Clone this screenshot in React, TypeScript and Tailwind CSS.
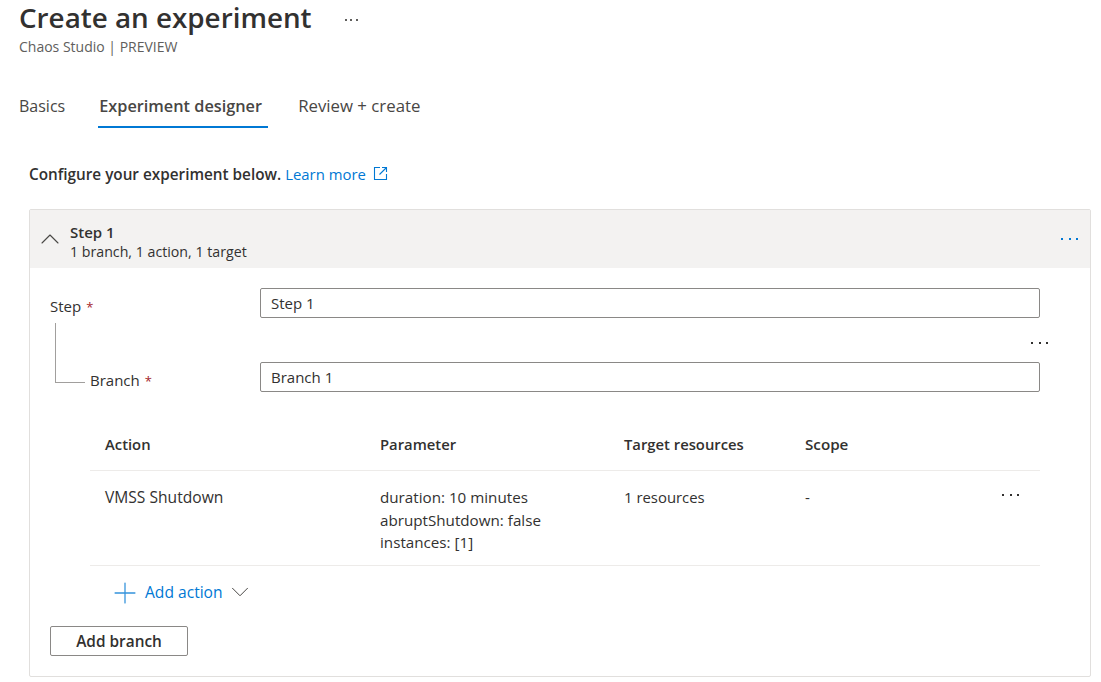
import { ChevronDown, ChevronUp, Plus } from "lucide-react";

const font = { fontFamily: '"Open Sans", "Noto Sans", sans-serif' };

// three square dots, the portal's "more" button
function Dots({ className }: { className: string }) {
  return (
    <div className={`flex gap-[5.5px] ${className}`}>
      <span className="w-[2px] h-[2px] bg-current" />
      <span className="w-[2px] h-[2px] bg-current" />
      <span className="w-[2px] h-[2px] bg-current" />
    </div>
  );
}

function Required() {
  return <span className="text-[#a4262c] ml-[5px] text-[13px]">*</span>;
}

function TextField({ value }: { value: string }) {
  return (
    <div className="h-[30px] border border-[#8a8886] rounded-[2px] px-[10px] flex items-center text-[15px]">
      {value}
    </div>
  );
}

function OpenInNew() {
  return (
    <svg className="ml-[7px] mb-[2px] text-[#0078d4]" width="15" height="15" viewBox="0 0 15 15" fill="none" stroke="currentColor" strokeWidth="1.1">
      <path d="M7 1.5H1.5V13.5H13.5V8" />
      <path d="M6.5 8.5L13.5 1.5M9 1.5H13.5V6" />
    </svg>
  );
}

export default function App() {
  return (
    <div className="w-[1101px] h-[682px] overflow-hidden bg-white text-[#323130] text-[15px]" style={font}>
      {/* Title */}
      <div className="pl-[19px] h-[34px] flex items-center">
        <h1 className="text-[27.8px] font-semibold leading-[34px]">Create an experiment</h1>
        <Dots className="ml-[33px] mt-[6px] text-[#605e5c] !gap-[3.5px]" />
      </div>
      <div className="pl-[19px] mt-[3px] text-[14px] leading-[20px] text-[#605e5c]">Chaos Studio | PREVIEW</div>

      {/* Tabs */}
      <div className="pl-[19px] mt-[34px] flex text-[16.3px] leading-[24px] text-[#484644]">
        <div className="pt-[3px] pb-[8px] text-[16px]">Basics</div>
        <div className="ml-[33px] w-[170px] pl-[1px] pt-[3px] pb-[8px] font-semibold border-b-2 border-[#0078d4]">
          Experiment designer
        </div>
        <div className="ml-[30px] pt-[3px] pb-[8px] text-[16.8px]">Review + create</div>
      </div>

      {/* Intro */}
      <div className="pl-[29px] mt-[36px] h-[20px] flex items-center">
        <span className="font-semibold text-[15.3px]">Configure your experiment below.</span>
        <span className="ml-[4px] text-[#0078d4] text-[14.9px]">Learn more</span>
        <OpenInNew />
      </div>

      {/* Step card */}
      <div className="ml-[29px] mt-[25px] w-[1062px] h-[468px] border border-[#e1dfdd] rounded-[2px]">
        <div className="h-[58px] bg-[#f3f2f1] flex items-center">
          <ChevronUp className="ml-[4px] text-[#484644]" size={32} strokeWidth={0.8} />
          <div className="ml-[4px] pt-[5px] text-[14.2px] leading-[19px]">
            <div className="font-semibold text-[15px]">Step 1</div>
            <div>1 branch, 1 action, 1 target</div>
          </div>
          <Dots className="ml-auto mr-[12px] mb-[1px] text-[#0078d4]" />
        </div>

        <div className="pl-[20px] pt-[20px]">
          {/* Step and branch fields */}
          <div className="grid grid-cols-[210px_780px] h-[104px]">
            <div>
              <div className="mt-[8px] leading-[20px]">
                Step
                <Required />
              </div>
              <div className="flex">
                <div className="ml-[5px] mt-[6px] w-[30px] h-[60px] border-l border-b border-[#a19f9d]" />
                <div className="ml-[5px] mt-[53px] leading-[20px]">
                  Branch
                  <Required />
                </div>
              </div>
            </div>
            <div>
              <TextField value="Step 1" />
              <Dots className="justify-end mt-[24px] mr-[-8px] text-[#323130]" />
              <div className="mt-[18px]">
                <TextField value="Branch 1" />
              </div>
            </div>
          </div>

          {/* Action table */}
          <div className="ml-[40px] w-[950px] mt-[27px]">
            <div className="grid grid-cols-[275px_244px_181px_1fr] pl-[15px] h-[52px] items-center font-semibold text-[14.8px] border-b border-[#edebe9]">
              <div>Action</div>
              <div>Parameter</div>
              <div>Target resources</div>
              <div className="text-[15.2px]">Scope</div>
            </div>
            <div className="grid grid-cols-[275px_244px_181px_1fr] pl-[15px] h-[95px] pt-[15px] border-b border-[#edebe9] leading-[22.5px] text-[15.2px]">
              <div className="text-[15.6px]">VMSS Shutdown</div>
              <div>
                <div>duration: 10 minutes</div>
                <div>abruptShutdown: false</div>
                <div>instances: [1]</div>
              </div>
              <div className="text-[14.9px]">1 resources</div>
              <div className="flex justify-between">
                <span>-</span>
                <Dots className="mr-[21px] mt-[8px] text-[#323130]" />
              </div>
            </div>
            <div className="flex items-center h-[54px] pl-[18px] text-[#0078d4]">
              <Plus className="opacity-80" size={34} strokeWidth={0.9} />
              <span className="ml-[3px] text-[15.6px]">Add action</span>
              <ChevronDown className="ml-[2px] mb-[3px] text-[#484644]" size={30} strokeWidth={0.8} />
            </div>
          </div>

          <button className="mt-[6px] w-[138px] h-[30px] pt-px border border-[#8a8886] rounded-[2px] font-semibold flex items-center justify-center text-[15.4px]">
            Add branch
          </button>
        </div>
      </div>
    </div>
  );
}
